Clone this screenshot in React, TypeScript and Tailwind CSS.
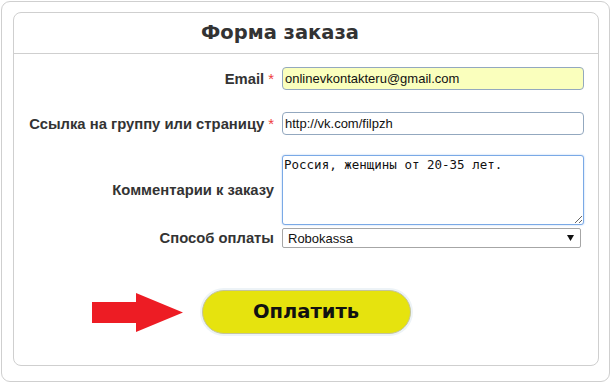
import React from 'react';

const labelCls =
    "w-[260px] shrink-0 text-right text-[14.8px] leading-[20px] font-bold text-[#333] font-['Liberation_Sans',Arial,sans-serif]";

function Req() {
    return <span className="ml-[4px] font-normal text-[#ee3b3b]">*</span>;
}

function Arrow() {
    return (
        <svg
            width="92"
            height="40"
            viewBox="0 0 92 40"
            className="absolute right-full top-[3px] mr-[18px]"
        >
            <path d="M0 9 H44 V0 L91 19.5 L44 39 V30 H0 Z" fill="#ed1c24" />
        </svg>
    );
}

export default function App() {
    return (
        <div className="h-[383px] w-[611px] bg-white p-[1px]">
            <div className="h-[381px] w-[609px] rounded-[9px] border border-[#cfcfcf] pl-[11px] pt-[10px]">
                <div className="h-[354px] w-[586px] rounded-[8px] border border-[#cfcfcf]">
                    <div className="flex h-[41px] items-center border-b border-[#cfcfcf] pl-[187px]">
                        <h1 className="text-[19.5px] font-bold text-[#333] font-['DejaVu_Sans',Verdana,sans-serif]">
                            Форма заказа
                        </h1>
                    </div>

                    <div className="flex flex-col pt-[13px]">
                        <div className="flex items-center gap-[8px]">
                            <label className={labelCls}>
                                Email
                                <Req />
                            </label>
                            <input
                                readOnly
                                value="onlinevkontakteru@gmail.com"
                                className="block h-[23px] w-[302px] rounded-[4px] border border-[#93a8bf] bg-[#faffbd] px-[2px] text-[13px] text-[#111] outline-none font-['Liberation_Sans',Arial,sans-serif]"
                            />
                        </div>

                        <div className="mt-[22px] flex items-center gap-[8px]">
                            <label className={labelCls}>
                                Ссылка на группу или страницу
                                <Req />
                            </label>
                            <input
                                readOnly
                                value="http://vk.com/filpzh"
                                className="block h-[23px] w-[302px] rounded-[4px] border border-[#93a8bf] bg-white px-[2px] text-[13px] text-[#111] outline-none font-['Liberation_Sans',Arial,sans-serif]"
                            />
                        </div>

                        <div className="mt-[20px] flex h-[70px] items-center gap-[8px]">
                            <label className={labelCls}>Комментарии к заказу</label>
                            <textarea
                                readOnly
                                value="Россия, женщины от 20-35 лет."
                                className="block h-[70px] w-[302px] rounded-[3px] border border-[#7aa9e6] bg-white px-[1px] py-[1px] text-[12.5px] leading-[15px] text-[#111] shadow-[0_0_2px_#a9c8f0] outline-none font-['DejaVu_Sans_Mono',monospace]"
                            />
                        </div>

                        <div className="mt-[3px] flex h-[20px] items-center gap-[8px]">
                            <label className={labelCls}>Способ оплаты</label>
                            <div className="relative h-[20px] w-[299px]">
                                <select className="block h-full w-full appearance-none rounded-[2px] border border-[#a6a6a6] bg-white pl-[5px] text-[13px] text-[#111] outline-none font-['Liberation_Sans',Arial,sans-serif]">
                                    <option>Robokassa</option>
                                </select>
                                <svg
                                    width="7"
                                    height="6"
                                    viewBox="0 0 7 6"
                                    className="pointer-events-none absolute right-[7px] top-[7px]"
                                >
                                    <path d="M0 0 H7 L3.5 6 Z" fill="#111" />
                                </svg>
                            </div>
                        </div>

                        <div className="mt-[42px] flex justify-center">
                            <div className="relative">
                                <Arrow />
                                <button className="block h-[44px] w-[209px] rounded-full border border-[#c4c49a] bg-[#e6e30e] text-[19.5px] font-bold text-[#111] ring-2 ring-[#edf3f7] font-['DejaVu_Sans',Verdana,sans-serif]">
                                    Оплатить
                                </button>
                            </div>
                        </div>
                    </div>
                </div>
            </div>
        </div>
    );
}
